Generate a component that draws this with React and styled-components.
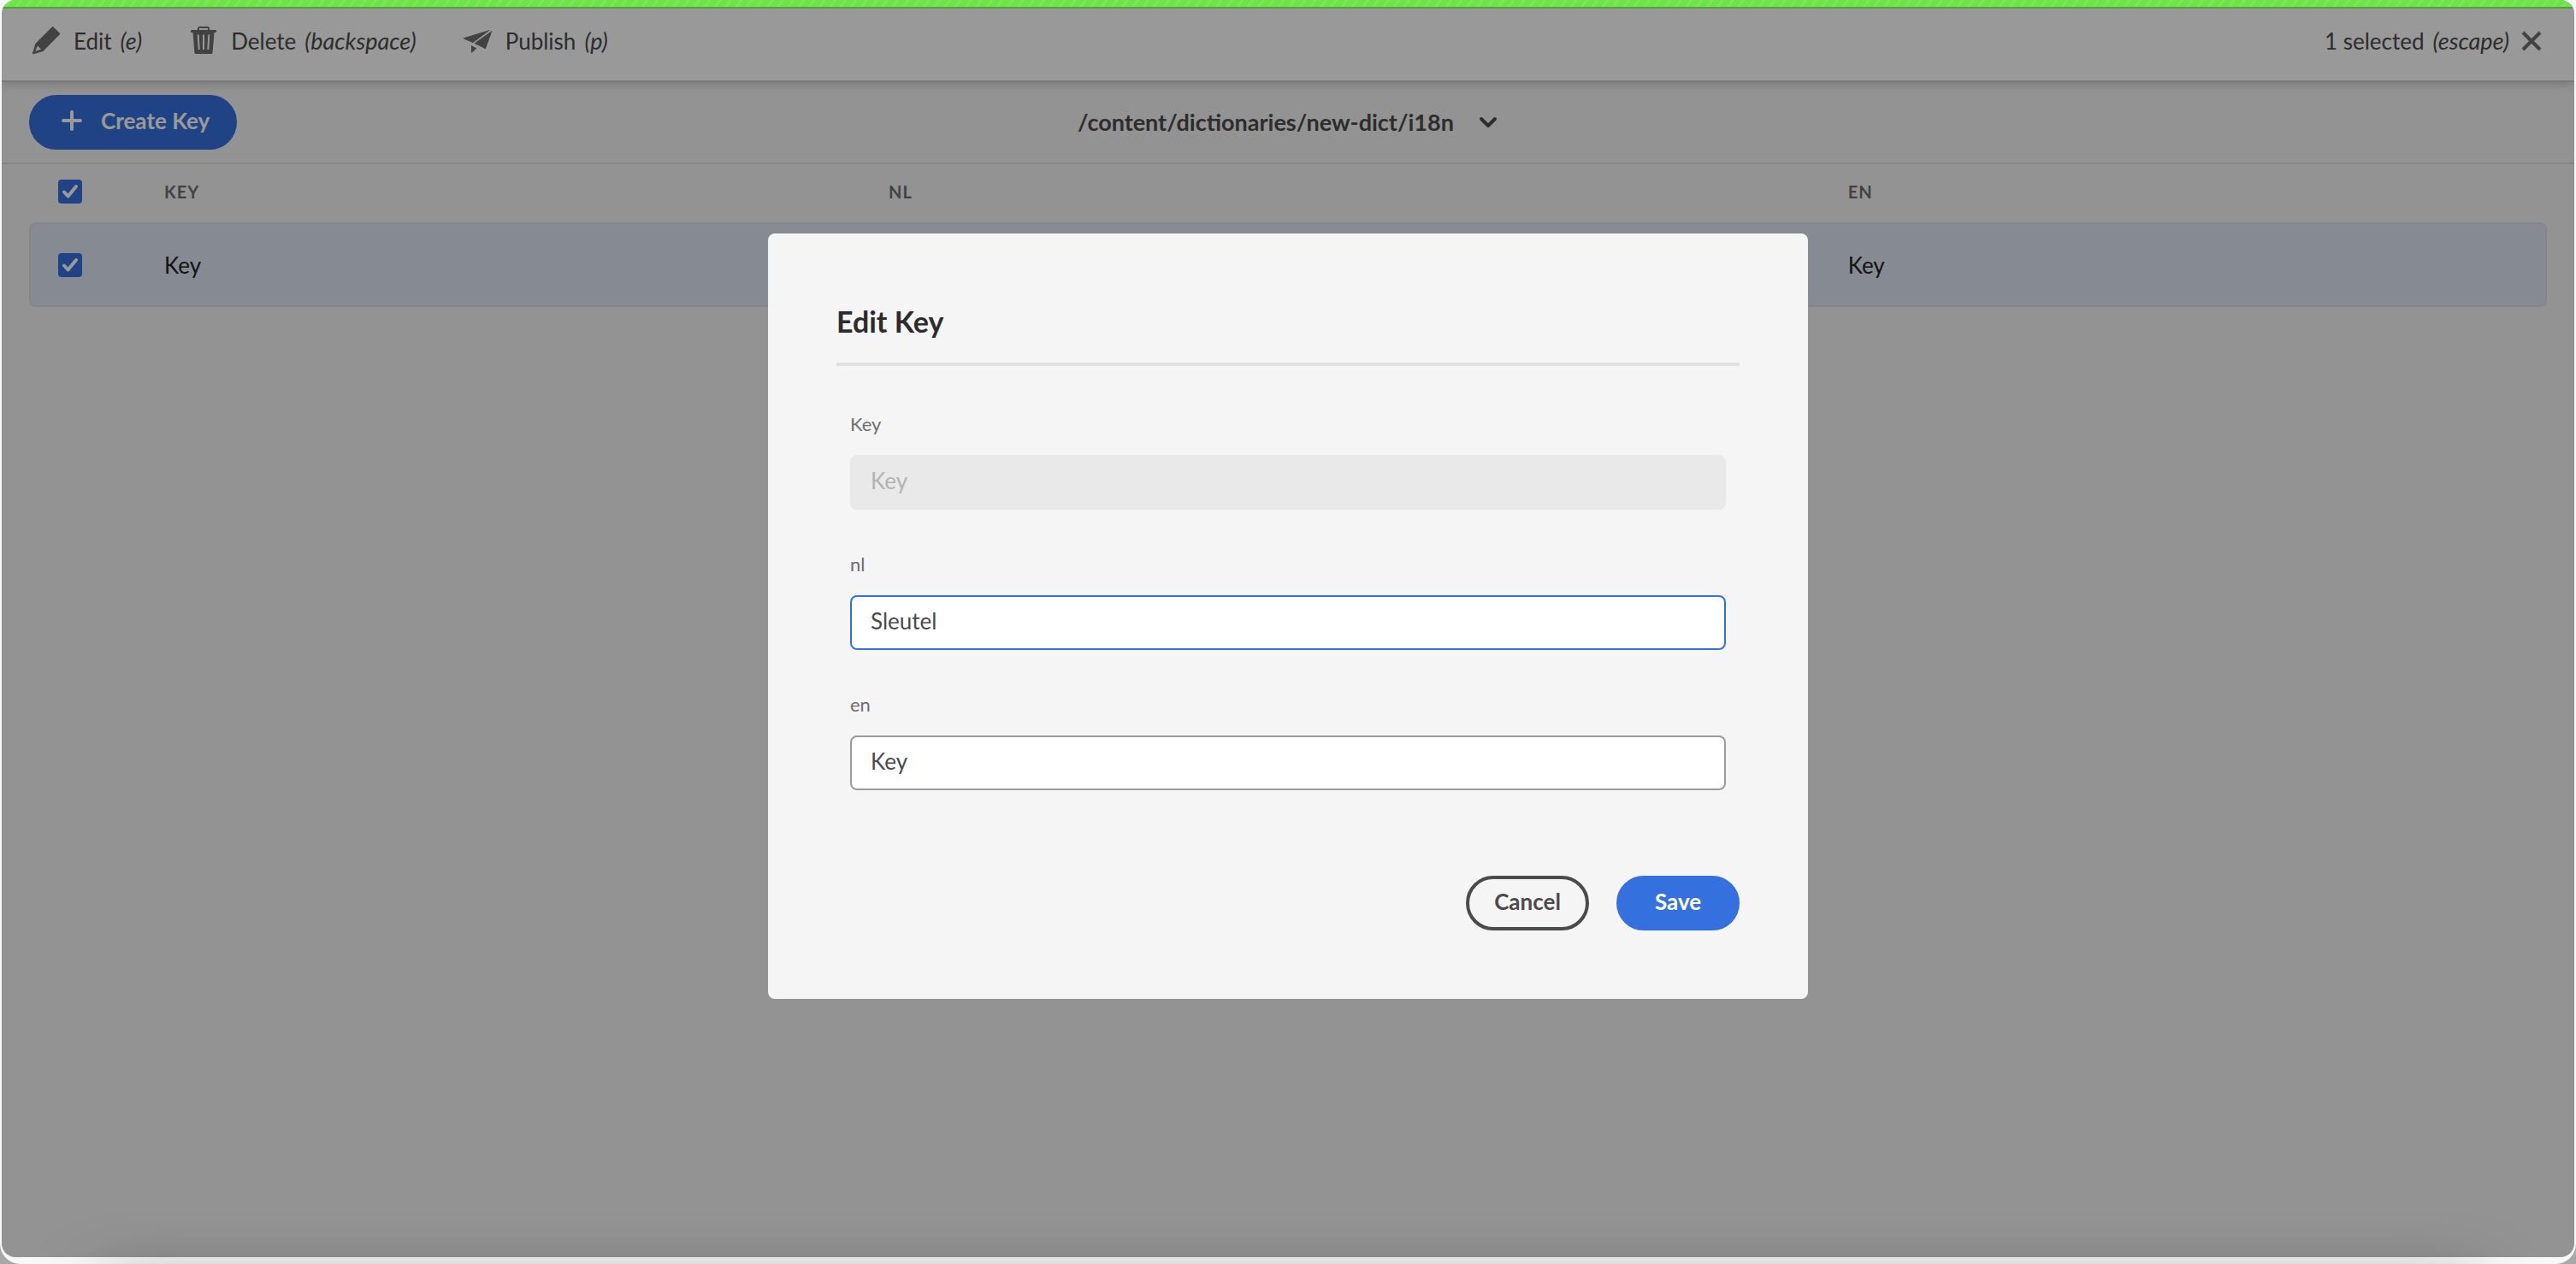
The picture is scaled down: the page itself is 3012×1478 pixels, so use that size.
import React, { useState } from "react";
import styled, { createGlobalStyle } from "styled-components";

const color = {
  accent: "#3571de",
  text: "#4b4b4b",
  strong: "#2c2c2c",
  subtle: "#6e6e6e",
  surface: "#f5f5f5",
  rule: "#e0e0e0",
};

const GlobalStyle = createGlobalStyle`
  *, *::before, *::after { box-sizing: border-box; }
  body {
    margin: 0;
    background: #a8a8a8;
    color: ${color.text};
    font-family: Lato, "Liberation Sans", sans-serif;
    font-size: 26px;
    line-height: 32px;
  }
  button, input { font: inherit; color: inherit; }
`;

const Frame = styled.div`
  position: relative;
  display: flex;
  min-height: 100vh;
  padding: 0 2px 8px;
  overflow: hidden;
  background: #f8f8f8;
  border-radius: 0 0 24px 24px;
`;

const DockShadow = styled.div`
  position: absolute;
  top: calc(100% + 32px);
  left: 120px;
  right: 120px;
  height: 200px;
  box-shadow: 0 0 80px rgba(0, 0, 0, 0.5);
  pointer-events: none;
`;

const Screen = styled.div`
  position: relative;
  flex: 1;
  overflow: hidden;
  background: ${color.surface};
  border-radius: 16px;
`;

const Progress = styled.div`
  position: absolute;
  inset: 0 0 auto;
  height: 10px;
  border-bottom: 2px solid #4fa336;
  background: repeating-linear-gradient(125deg, #6fe34a 0 6px, #7fe55f 8px 9px, #6fe34a 10px);
`;

const ActionBar = styled.header`
  display: flex;
  align-items: center;
  justify-content: space-between;
  height: 96px;
  padding: 2px 38px 0 34px;
  background: #fff;
  border-bottom: 2px solid #cccccc;
  box-shadow: 0 2px 12px rgba(0, 0, 0, 0.2);
`;

const Actions = styled.div`
  display: flex;
  gap: 54px;
`;

const Action = styled.button`
  display: flex;
  align-items: center;
  gap: 14px;
  padding: 0;
  border: 0;
  background: none;
  svg { color: ${color.subtle}; }
`;

const Label = styled.span`
  display: flex;
  gap: 10px;
  em { font-size: 27px; }
`;

const TitleBar = styled.div`
  display: grid;
  grid-template-columns: 1fr auto 1fr;
  align-items: center;
  height: 96px;
  padding: 0 32px;
  border-bottom: 2px solid ${color.rule};
`;

const Button = styled.button`
  display: inline-flex;
  align-items: center;
  justify-content: center;
  justify-self: start;
  gap: 20px;
  min-width: 144px;
  height: 64px;
  padding: ${(p) => (p.$withIcon ? "0 28px 4px 32px" : "0 24px 4px")};
  border: 4px solid ${(p) => (p.$primary ? color.accent : color.text)};
  border-radius: 32px;
  background: ${(p) => (p.$primary ? color.accent : "transparent")};
  color: ${(p) => (p.$primary ? "#fff" : color.text)};
  font-weight: 700;
`;

const PathButton = styled.button`
  display: flex;
  align-items: center;
  gap: 28px;
  padding: 0;
  border: 0;
  background: none;
  font-size: 27px;
  font-weight: 700;
`;

const KeyTable = styled.table`
  width: calc(100% - 64px);
  margin: 0 32px;
  table-layout: fixed;
  border-collapse: separate;
  border-spacing: 0;
  text-align: left;
`;

const Col = styled.col`
  width: ${(p) => p.$width};
`;

const HeadCell = styled.th`
  height: 68px;
  padding: 0 16px 4px;
  color: ${color.subtle};
  font-size: 20px;
  font-weight: 700;
  letter-spacing: 1px;
  text-transform: uppercase;
  &:first-child { padding-left: 34px; }
`;

const Cell = styled.td`
  height: 99px;
  padding: 0 16px;
  color: #222;
  background: #dfe6f3;
  border: solid ${color.rule};
  border-width: 2px 0;
  &:first-child {
    padding-left: 32px;
    border-left-width: 2px;
    border-radius: 8px 0 0 8px;
  }
  &:last-child {
    border-right-width: 2px;
    border-radius: 0 8px 8px 0;
  }
`;

const Tick = styled.label`
  position: relative;
  display: flex;
  width: 28px;
  height: 28px;
  svg {
    position: absolute;
    inset: 4px;
    color: #fff;
    pointer-events: none;
  }
`;

const TickInput = styled.input`
  appearance: none;
  width: 28px;
  height: 28px;
  margin: 0;
  border: 2px solid ${color.subtle};
  border-radius: 4px;
  &:checked {
    border-color: ${color.accent};
    background: ${color.accent};
  }
`;

const Overlay = styled.div`
  position: absolute;
  inset: 0;
  display: grid;
  place-items: center;
  padding-bottom: 29px;
  background: rgba(0, 0, 0, 0.4);
`;

const Dialog = styled.section`
  width: 1216px;
  max-width: 100%;
  padding: 80px;
  background: ${color.surface};
  border-radius: 8px;
`;

const DialogTitle = styled.h2`
  margin: 0;
  padding-bottom: 25px;
  border-bottom: 4px solid #e1e1e1;
  color: ${color.strong};
  font-size: 34px;
  line-height: 46px;
`;

const Fields = styled.div`
  display: grid;
  gap: 50px;
  padding: 54px 16px 100px;
`;

const Field = styled.label`
  display: grid;
  gap: 22px;
  color: ${color.subtle};
  font-size: 22px;
  line-height: 28px;
`;

const TextInput = styled.input`
  width: 100%;
  height: 64px;
  padding: 0 22px 4px;
  border: 2px solid #9b9b9b;
  border-radius: 8px;
  background: #fff;
  color: ${color.text};
  font-size: 26px;
  outline: none;
  &:focus { border-color: ${color.accent}; }
  &:disabled {
    border-color: #e9e9e9;
    background: #e9e9e9;
    color: #b3b3b3;
  }
`;

const Buttons = styled.div`
  display: flex;
  justify-content: flex-end;
  gap: 32px;
`;

const EditIcon = () => (
  <svg width="36" height="36" viewBox="0 0 36 36" fill="currentColor" aria-hidden="true">
    <path d="M26.3 1.600 33.700 8.500a1.4 1.4 0 0 1 0 2L14.3 30 3.4 33.300a1 1 0 0 1-1.300-1.300L5.400 21 24.800 1.600a1.200 1.200 0 0 1 1.500 0ZM8 23.500 5.300 30.100l6.700-2.600Z" />
  </svg>
);

const DeleteIcon = () => (
  <svg width="36" height="36" viewBox="0 0 36 36" aria-hidden="true">
    <path d="M12 6V3.500a1.500 1.500 0 0 1 1.500-1.500h9a1.500 1.500 0 0 1 1.500 1.500V6" fill="none" stroke="currentColor" strokeWidth="2" />
    <path d="M4 5h28a1 1 0 0 1 1 1v1a1 1 0 0 1-1 1h-1.500l-2 24a1.200 1.200 0 0 1-1 1h-19a1.200 1.200 0 0 1-1-1l-2-24H4a1 1 0 0 1-1-1V6a1 1 0 0 1 1-1Z" fill="currentColor" />
    <path d="m11.700 10.500 1 17.500M18 10.500V28M24.300 10.500l-1 17.500" fill="none" stroke="#fff" strokeWidth="2" />
  </svg>
);

const PublishIcon = () => (
  <svg width="36" height="36" viewBox="0 0 36 36" fill="currentColor" aria-hidden="true">
    <path d="M1.300 14.300 32.500 4.800 12 20 1.300 15.400a.6.6 0 0 1 0-1.100Z" />
    <path d="M34.600 5.800 27 26.400a.8.8 0 0 1-1.200.4L13.500 20.800Z" />
    <path d="m10 23 6.300 3.500-5.300 5a.6.6 0 0 1-1-.4Z" />
  </svg>
);

const CloseIcon = () => (
  <svg width="24" height="24" viewBox="0 0 24 24" fill="none" stroke="currentColor" strokeWidth="4" aria-hidden="true">
    <path d="m2 2 20 20M22 2 2 22" />
  </svg>
);

const PlusIcon = () => (
  <svg width="28" height="28" viewBox="0 0 28 28" fill="none" stroke="currentColor" strokeWidth="4" strokeLinecap="round" aria-hidden="true">
    <path d="M14 4v20M4 14h20" />
  </svg>
);

const ChevronIcon = () => (
  <svg width="24" height="16" viewBox="0 0 24 16" fill="none" stroke="currentColor" strokeWidth="4" strokeLinecap="round" strokeLinejoin="round" aria-hidden="true">
    <path d="m4 4 8 8 8-8" />
  </svg>
);

const CheckIcon = () => (
  <svg width="20" height="20" viewBox="0 0 20 20" fill="none" stroke="currentColor" strokeWidth="4" strokeLinecap="round" strokeLinejoin="round" aria-hidden="true">
    <path d="m3 10.500 4.500 5L17 4" />
  </svg>
);

function CheckBox({ name }) {
  const [checked, setChecked] = useState(true);
  return (
    <Tick>
      <TickInput type="checkbox" aria-label={name} checked={checked} onChange={() => setChecked(!checked)} />
      {checked && <CheckIcon />}
    </Tick>
  );
}

const actions = [
  { name: "Edit", shortcut: "(e)", Icon: EditIcon },
  { name: "Delete", shortcut: "(backspace)", Icon: DeleteIcon },
  { name: "Publish", shortcut: "(p)", Icon: PublishIcon },
];

export default function App() {
  return (
    <>
      <GlobalStyle />
      <Frame>
        <Screen>
          <ActionBar>
            <Actions>
              {actions.map(({ name, shortcut, Icon }) => (
                <Action key={name} type="button">
                  <Icon />
                  <Label>
                    {name} <em>{shortcut}</em>
                  </Label>
                </Action>
              ))}
            </Actions>
            <Action type="button">
              <Label>
                1 selected <em>(escape)</em>
              </Label>
              <CloseIcon />
            </Action>
          </ActionBar>
          <TitleBar>
            <Button type="button" $primary $withIcon>
              <PlusIcon />
              Create Key
            </Button>
            <PathButton type="button">
              /content/dictionaries/new-dict/i18n
              <ChevronIcon />
            </PathButton>
          </TitleBar>
          <KeyTable>
            <colgroup>
              <Col $width="142px" />
              <Col $width="28.77%" />
              <Col $width="38.1%" />
              <Col />
            </colgroup>
            <thead>
              <tr>
                <HeadCell><CheckBox name="Select all" /></HeadCell>
                <HeadCell>Key</HeadCell>
                <HeadCell>nl</HeadCell>
                <HeadCell>en</HeadCell>
              </tr>
            </thead>
            <tbody>
              <tr>
                <Cell><CheckBox name="Select Key" /></Cell>
                <Cell>Key</Cell>
                <Cell />
                <Cell>Key</Cell>
              </tr>
            </tbody>
          </KeyTable>
          <Overlay>
            <Dialog role="dialog" aria-modal="true" aria-labelledby="dialog-title">
              <DialogTitle id="dialog-title">Edit Key</DialogTitle>
              <Fields>
                <Field>
                  Key
                  <TextInput defaultValue="Key" disabled />
                </Field>
                <Field>
                  nl
                  <TextInput defaultValue="Sleutel" autoFocus />
                </Field>
                <Field>
                  en
                  <TextInput defaultValue="Key" />
                </Field>
              </Fields>
              <Buttons>
                <Button type="button">Cancel</Button>
                <Button type="submit" $primary>Save</Button>
              </Buttons>
            </Dialog>
          </Overlay>
          <Progress />
        </Screen>
        <DockShadow />
      </Frame>
    </>
  );
}
